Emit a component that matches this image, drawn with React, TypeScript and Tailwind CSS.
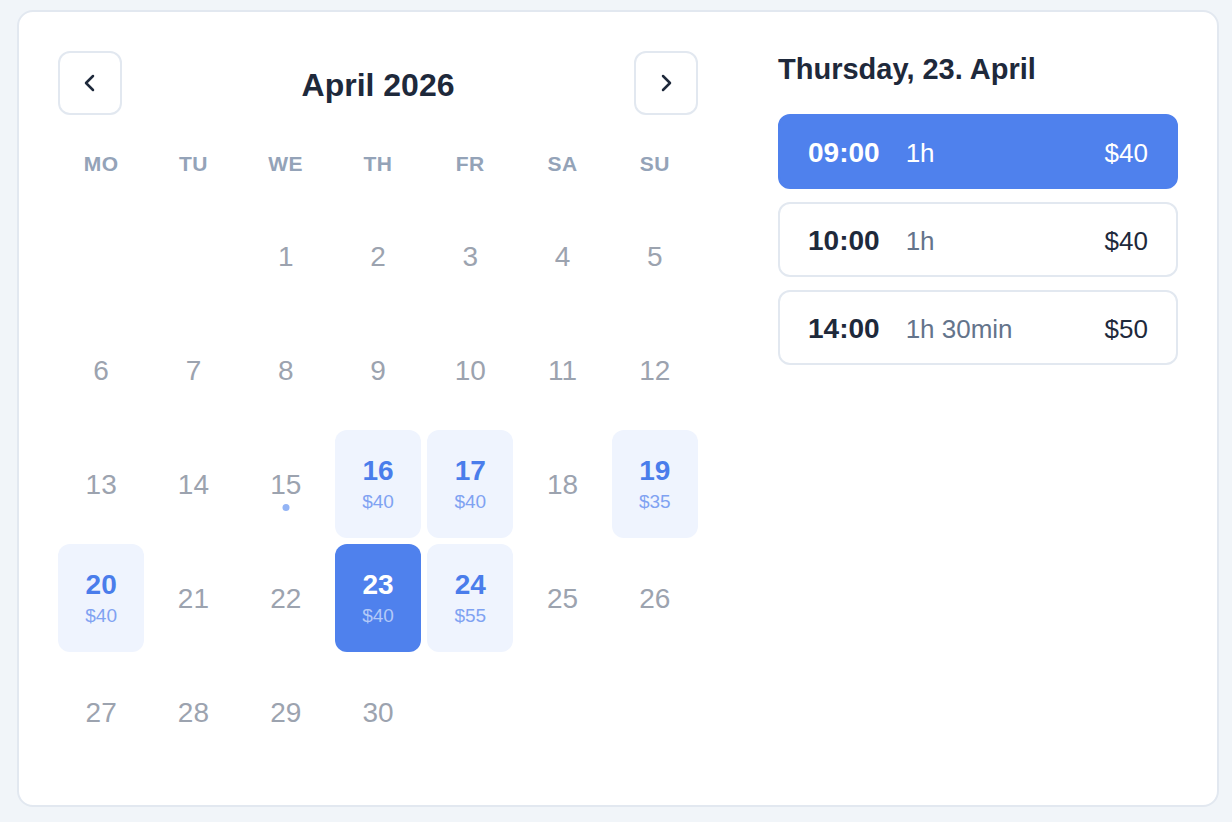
import { useState } from "react";

type Slot = { time: string; duration: string; price: string };

const prices: Record<number, string> = {
  16: "$40",
  17: "$40",
  19: "$35",
  20: "$40",
  23: "$40",
  24: "$55",
};

const slots: Slot[] = [
  { time: "09:00", duration: "1h", price: "$40" },
  { time: "10:00", duration: "1h", price: "$40" },
  { time: "14:00", duration: "1h 30min", price: "$50" },
];

const weekdays = ["MO", "TU", "WE", "TH", "FR", "SA", "SU"];

function Chevron({ dir }: { dir: "left" | "right" }) {
  return (
    <svg width="24" height="24" viewBox="0 0 24 24" fill="none" stroke="#1e293b" strokeWidth="2.5" strokeLinecap="round" strokeLinejoin="round">
      {dir === "left" ? <path d="M15 5 8 12l7 7" /> : <path d="m9 5 7 7-7 7" />}
    </svg>
  );
}

export default function App() {
  const [selectedDay, setSelectedDay] = useState(23);
  const [selectedSlot, setSelectedSlot] = useState(0);

  // April 2026 starts on a Wednesday
  const cells: (number | null)[] = [null, null];
  for (let d = 1; d <= 30; d++) cells.push(d);

  return (
    <div className="min-h-screen bg-[#f1f5f9] pl-[17px] pt-[10px] pb-[16px]" style={{ fontFamily: '"Liberation Sans", Arial, sans-serif' }}>
      <div className="w-[1202px] bg-white border-2 border-[#e2e8f0] rounded-2xl p-[39px] flex gap-[80px]">
        {/* calendar */}
        <div className="w-[640px]">
          <div className="h-[64px] flex items-center justify-between">
            <button className="w-[64px] h-[64px] border-2 border-[#e2e8f0] rounded-xl flex items-center justify-center bg-white">
              <Chevron dir="left" />
            </button>
            <h2 className="text-[32px] font-bold text-[#1e293b] pt-[4px]">April 2026</h2>
            <button className="w-[64px] h-[64px] border-2 border-[#e2e8f0] rounded-xl flex items-center justify-center bg-white">
              <Chevron dir="right" />
            </button>
          </div>

          <div className="grid grid-cols-7 gap-x-[6px] mt-[24px] h-[48px] items-center">
            {weekdays.map((w) => (
              <div key={w} className="text-center text-[21px] font-bold text-[#94a3b8] tracking-[0.5px] pt-[1px]">
                {w}
              </div>
            ))}
          </div>

          <div className="grid grid-cols-7 gap-[6px] mt-[15px]">
            {cells.map((d, i) => {
              if (d === null) return <div key={"e" + i} className="h-[108px]" />;
              const price = prices[d];
              if (price) {
                const sel = d === selectedDay;
                return (
                  <button
                    key={d}
                    onClick={() => setSelectedDay(d)}
                    className={
                      "h-[108px] rounded-xl flex flex-col items-center justify-center pt-[3px] " +
                      (sel ? "bg-[#4f81ed]" : "bg-[#eff4fe]")
                    }
                  >
                    <span className={"text-[28px] leading-[32px] font-bold " + (sel ? "text-white" : "text-[#4a7deb]")}>{d}</span>
                    <span className={"text-[19px] leading-[30px] " + (sel ? "text-[#b3c9f8]" : "text-[#7fa2f2]")}>{price}</span>
                  </button>
                );
              }
              return (
                <div key={d} className="h-[108px] relative flex items-center justify-center pt-[1px]">
                  <span className="text-[28px] text-[#9ca3af]">{d}</span>
                  {d === 15 && <span className="absolute left-1/2 top-[74px] -translate-x-1/2 w-[7px] h-[7px] rounded-full bg-[#93b4f5]" />}
                </div>
              );
            })}
          </div>
        </div>

        {/* time slots */}
        <div className="w-[400px]">
          <h3 className="text-[29px] leading-[36px] font-bold text-[#1e293b]">Thursday, 23. April</h3>
          <div className="mt-[27px] flex flex-col gap-[13px]">
            {slots.map((s, i) => {
              const sel = i === selectedSlot;
              return (
                <button
                  key={s.time}
                  onClick={() => setSelectedSlot(i)}
                  className={
                    "h-[75px] rounded-xl flex items-center px-[28px] pt-[3px] border-2 " +
                    (sel ? "bg-[#4f81ed] border-[#4f81ed]" : "bg-white border-[#e2e8f0]")
                  }
                >
                  <span className={"text-[28px] font-bold " + (sel ? "text-white" : "text-[#1e293b]")}>{s.time}</span>
                  <span className={"ml-[26px] text-[26px] " + (sel ? "text-white" : "text-[#64748b]")}>{s.duration}</span>
                  <span className={"ml-auto text-[26px] " + (sel ? "text-white" : "text-[#1e293b]")}>{s.price}</span>
                </button>
              );
            })}
          </div>
        </div>
      </div>
    </div>
  );
}
